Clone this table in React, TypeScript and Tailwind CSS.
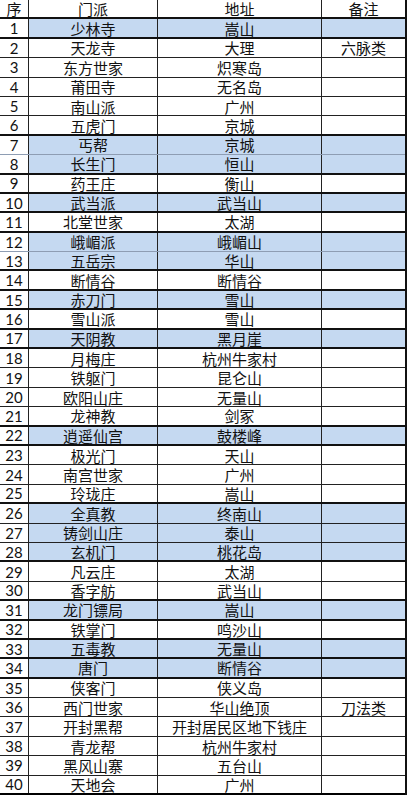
import React from "react";

const rows: [string, string, string][] = [
  ["少林寺", "嵩山", ""],
  ["天龙寺", "大理", "六脉类"],
  ["东方世家", "炽寒岛", ""],
  ["莆田寺", "无名岛", ""],
  ["南山派", "广州", ""],
  ["五虎门", "京城", ""],
  ["丐帮", "京城", ""],
  ["长生门", "恒山", ""],
  ["药王庄", "衡山", ""],
  ["武当派", "武当山", ""],
  ["北堂世家", "太湖", ""],
  ["峨嵋派", "峨嵋山", ""],
  ["五岳宗", "华山", ""],
  ["断情谷", "断情谷", ""],
  ["赤刀门", "雪山", ""],
  ["雪山派", "雪山", ""],
  ["天阴教", "黑月崖", ""],
  ["月梅庄", "杭州牛家村", ""],
  ["铁躯门", "昆仑山", ""],
  ["欧阳山庄", "无量山", ""],
  ["龙神教", "剑冢", ""],
  ["逍遥仙宫", "鼓楼峰", ""],
  ["极光门", "天山", ""],
  ["南宫世家", "广州", ""],
  ["玲珑庄", "嵩山", ""],
  ["全真教", "终南山", ""],
  ["铸剑山庄", "泰山", ""],
  ["玄机门", "桃花岛", ""],
  ["凡云庄", "太湖", ""],
  ["香字舫", "武当山", ""],
  ["龙门镖局", "嵩山", ""],
  ["铁掌门", "鸣沙山", ""],
  ["五毒教", "无量山", ""],
  ["唐门", "断情谷", ""],
  ["侠客门", "侠义岛", ""],
  ["西门世家", "华山绝顶", "刀法类"],
  ["开封黑帮", "开封居民区地下钱庄", ""],
  ["青龙帮", "杭州牛家村", ""],
  ["黑风山寨", "五台山", ""],
  ["天地会", "广州", ""],
];

const blue = new Set([1, 7, 8, 10, 12, 13, 15, 17, 22, 26, 27, 28, 31, 33, 34]);
const lightSep = new Set([7, 12]);
const thinDarkSep = new Set([26, 27]);

const cjk = "font-['Noto_Sans_CJK_SC',sans-serif]";

function borderFor(i: number): string {
  if (i === 40) return "border-b-2 border-black";
  if (lightSep.has(i)) return "border-b border-[#8e9db3]";
  if (thinDarkSep.has(i)) return "border-b border-[#222]";
  if (blue.has(i) || blue.has(i + 1)) return "border-b-2 border-[#111]";
  return "border-b border-[#222]";
}

export default function App() {
  return (
    <div className="w-[408px] h-[797px] bg-white overflow-hidden">
      <div className={`w-[407px] border-r-2 border-[#111] text-[#111] ${cjk}`}>
        <div className={`flex h-[19.4px] ${borderFor(0)}`}>
          <div className="w-[29px] shrink-0 border-r border-[#222] flex items-center justify-center text-[15px] leading-[17px]">序</div>
          <div className="w-[129px] shrink-0 border-r border-[#222] flex items-center justify-center text-[15px] leading-[17px]">门派</div>
          <div className="w-[164px] shrink-0 border-r border-[#222] flex items-center justify-center text-[15px] leading-[17px]">地址</div>
          <div className="flex-1 flex items-center justify-center text-[15px] leading-[17px]">备注</div>
        </div>
        {rows.map((r, idx) => {
          const n = idx + 1;
          const isBlue = blue.has(n);
          const fill = isBlue ? "bg-[#c5d9f1]" : "bg-white";
          return (
            <div key={n} className={`flex h-[19.4px] ${borderFor(n)}`}>
              <div className="w-[29px] shrink-0 border-r border-[#222] flex items-center justify-center text-[15px] leading-[16px] font-['Lato',sans-serif]">
                {n}
              </div>
              <div className={`w-[129px] shrink-0 border-r border-[#222] flex items-center justify-center text-[15px] leading-[17px] ${fill}`}>
                {r[0]}
              </div>
              <div className={`w-[164px] shrink-0 border-r border-[#222] flex items-center justify-center text-[15px] leading-[17px] ${fill}`}>
                {r[1]}
              </div>
              <div className={`flex-1 flex items-center justify-center text-[15px] leading-[17px] ${fill}`}>
                {r[2]}
              </div>
            </div>
          );
        })}
      </div>
    </div>
  );
}
